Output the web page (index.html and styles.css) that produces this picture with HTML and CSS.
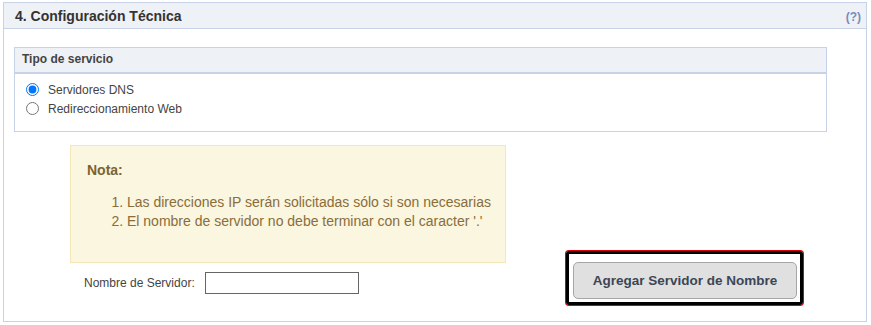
FILE: index.html
```html
<!DOCTYPE html>
<html lang="es">
<head>
<meta charset="utf-8">
<link rel="stylesheet" href="styles.css">
</head>
<body>
<div class="panel">
  <div class="panel-head">
    <span class="panel-title">4. Configuración Técnica</span>
    <span class="help">(?)</span>
  </div>
  <div class="panel-body">
    <div class="box">
      <div class="box-head">Tipo de servicio</div>
      <div class="box-body">
        <label class="opt"><input type="radio" name="svc" checked> Servidores DNS</label>
        <label class="opt"><input type="radio" name="svc"> Redireccionamiento Web</label>
      </div>
    </div>
    <div class="lower">
      <div class="left-col">
        <div class="note">
          <div class="note-title">Nota:</div>
          <ol class="note-list">
            <li>Las direcciones IP serán solicitadas sólo si son necesarias</li>
            <li>El nombre de servidor no debe terminar con el caracter '.'</li>
          </ol>
        </div>
        <div class="form-row">
          <span class="form-label">Nombre de Servidor:</span>
          <input type="text" class="form-input">
        </div>
      </div>
      <div class="btn-wrap">
        <button class="btn">Agregar Servidor de Nombre</button>
      </div>
    </div>
  </div>
</div>
</body>
</html>
```

FILE: styles.css
```css
* { box-sizing: border-box; }
body {
  margin: 0;
  padding: 2px 4px 3px 3px;
  font-family: "Liberation Sans", Arial, sans-serif;
  background: #fff;
}
.panel {
  width: 864px;
  height: 320px;
  border: 1px solid #c8d2e6;
}
.panel-head {
  height: 26px;
  background: #eef1f6;
  border-bottom: 1px solid #c8d2e6;
  display: flex;
  align-items: center;
  justify-content: space-between;
  padding: 1px 5px 0 11px;
}
.panel-title {
  font-size: 14px;
  font-weight: bold;
  color: #333;
}
.help {
  font-size: 12px;
  font-weight: bold;
  color: #7a8bbd;
  padding-top: 2px;
}
.panel-body {
  padding: 18px 0 0 10px;
}
.box {
  width: 813px;
}
.box-head {
  height: 27px;
  background: #eef1f6;
  border: 1px solid #c8d2e6;
  border-bottom: 2px solid #c8d2e6;
  font-size: 12px;
  font-weight: bold;
  color: #444;
  padding: 4px 0 0 7px;
}
.box-body {
  width: 813px;
  height: 58px;
  border: 1px solid #c8d2e6;
  border-top: none;
  padding: 9px 0 0 10px;
  display: flex;
  flex-direction: column;
  gap: 6px;
}
.opt {
  display: flex;
  align-items: center;
  font-size: 12px;
  color: #444;
  height: 13px;
}
.opt input {
  margin: 0 9px 0 1px;
  width: 13px;
  height: 13px;
}
.lower {
  display: flex;
  align-items: flex-start;
  padding: 13px 0 0 56px;
}
.left-col {
  width: 436px;
}
.note {
  height: 118px;
  background: #faf6df;
  border: 1px solid #f4e7b8;
  padding: 16px 0 0 16px;
}
.note-title {
  font-size: 14px;
  font-weight: bold;
  color: #7a6433;
}
.note-list {
  margin: 15px 0 0 0;
  padding-left: 40px;
  font-size: 14px;
  line-height: 19px;
  color: #8a6d3b;
}
.form-row {
  display: flex;
  align-items: center;
  padding: 9px 0 0 14px;
  gap: 10px;
}
.form-label {
  font-size: 12px;
  color: #444;
}
.form-input {
  width: 154px;
  height: 22px;
  border: 1px solid #666;
  margin: 0;
}
.btn-wrap {
  margin: 106px 0 0 60px;
  border: 3px solid #000;
  border-radius: 3px;
  box-shadow: 0 0 0 1px #d00;
  padding: 8px 3px 3px 4px;
}
.btn {
  display: block;
  width: 224px;
  height: 37px;
  background: #e0e0e0;
  border: 1px solid #a6a6a6;
  border-radius: 5px;
  font-family: "Liberation Sans", Arial, sans-serif;
  font-size: 13.5px;
  font-weight: bold;
  color: #3b4656;
  padding: 0;
}
```
